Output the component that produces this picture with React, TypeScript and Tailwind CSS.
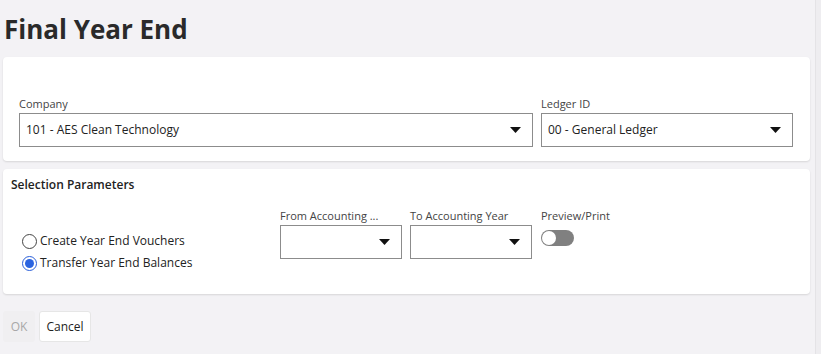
import React, { useState } from 'react';

const Caret: React.FC = () => (
  <svg width="11" height="6" viewBox="0 0 11 6" className="shrink-0">
    <path d="M0 0 L11 0 L5.5 6 Z" fill="#111" />
  </svg>
);

const SelectBox: React.FC<{ label: string; value?: string; className?: string }> = ({ label, value, className }) => (
  <div className={`flex flex-col ${className ?? ''}`}>
    <span className="text-[11px] leading-[14px] text-[#444] mb-[2px] whitespace-nowrap">{label}</span>
    <div className="h-[34px] border border-[#8c8c8c] bg-white flex items-center justify-between pl-[6px] pr-[11px]">
      <span className="text-[12px] text-[#222]">{value}</span>
      <Caret />
    </div>
  </div>
);

const Radio: React.FC<{ checked: boolean; label: string; onClick: () => void }> = ({ checked, label, onClick }) => (
  <label className="flex items-center gap-[3px] h-[18px] cursor-pointer" onClick={onClick}>
    <span className={`w-[15px] h-[15px] rounded-full border flex items-center justify-center ${checked ? 'border-[#2b5fd9]' : 'border-[#444]'}`}>
      {checked && <span className="w-[9px] h-[9px] rounded-full bg-[#2b64e0]" />}
    </span>
    <span className="text-[12px] text-[#222]">{label}</span>
  </label>
);

const App: React.FC = () => {
  const [mode, setMode] = useState<'create' | 'transfer'>('transfer');

  return (
    <div className="h-[354px] w-[821px] bg-[#f3f2f5] flex overflow-hidden" style={{ fontFamily: '"Open Sans", sans-serif' }}>
      <div className="w-[810px] pl-[3px] flex flex-col">
        <h1 className="text-[26px] font-bold text-[#2a2a2a] leading-[32px] pl-[1px] pt-[13px]">Final Year End</h1>

        <div className="mt-[12px] bg-white rounded-[4px] shadow-[0_1px_2px_rgba(0,0,0,0.12)] h-[104px] px-[16px] pt-[40px] flex gap-[8px]">
          <SelectBox label="Company" value="101 - AES Clean Technology" className="w-[514px]" />
          <SelectBox label="Ledger ID" value="00 - General Ledger" className="w-[252px]" />
        </div>

        <div className="mt-[8px] bg-white rounded-[4px] shadow-[0_1px_2px_rgba(0,0,0,0.12)] h-[125px] px-[8px] pt-[7px]">
          <div className="text-[12px] font-semibold text-[#222]">Selection Parameters</div>
          <div className="flex mt-[15px]">
            <div className="flex flex-col gap-[4px] pl-[11px] pt-[23px] w-[269px]">
              <Radio checked={mode === 'create'} label="Create Year End Vouchers" onClick={() => setMode('create')} />
              <Radio checked={mode === 'transfer'} label="Transfer Year End Balances" onClick={() => setMode('transfer')} />
            </div>
            <SelectBox label="From Accounting ..." className="w-[122px]" />
            <SelectBox label="To Accounting Year" className="w-[122px] ml-[8px]" />
            <div className="flex flex-col ml-[9px]">
              <span className="text-[11px] leading-[14px] text-[#444] mb-[2px]">Preview/Print</span>
              <div className="mt-[5px] w-[33px] h-[16px] rounded-full bg-[#808080] relative">
                <span className="absolute left-[1px] top-[1px] w-[14px] h-[14px] rounded-full bg-white" />
              </div>
            </div>
          </div>
        </div>

        <div className="flex gap-[4px] mt-[17px]">
          <button className="h-[31px] w-[32px] rounded-[3px] bg-[#f0eff1] text-[12px] text-[#a8a8a8]">OK</button>
          <button className="h-[31px] w-[52px] rounded-[3px] bg-white border border-[#e6e6e6] text-[12px] text-[#222]">Cancel</button>
        </div>
      </div>
      <div className="ml-[5px] w-[6px] h-full bg-[#eeedf0] border-l border-[#e4e3e6]" />
    </div>
  );
};

export default App;
